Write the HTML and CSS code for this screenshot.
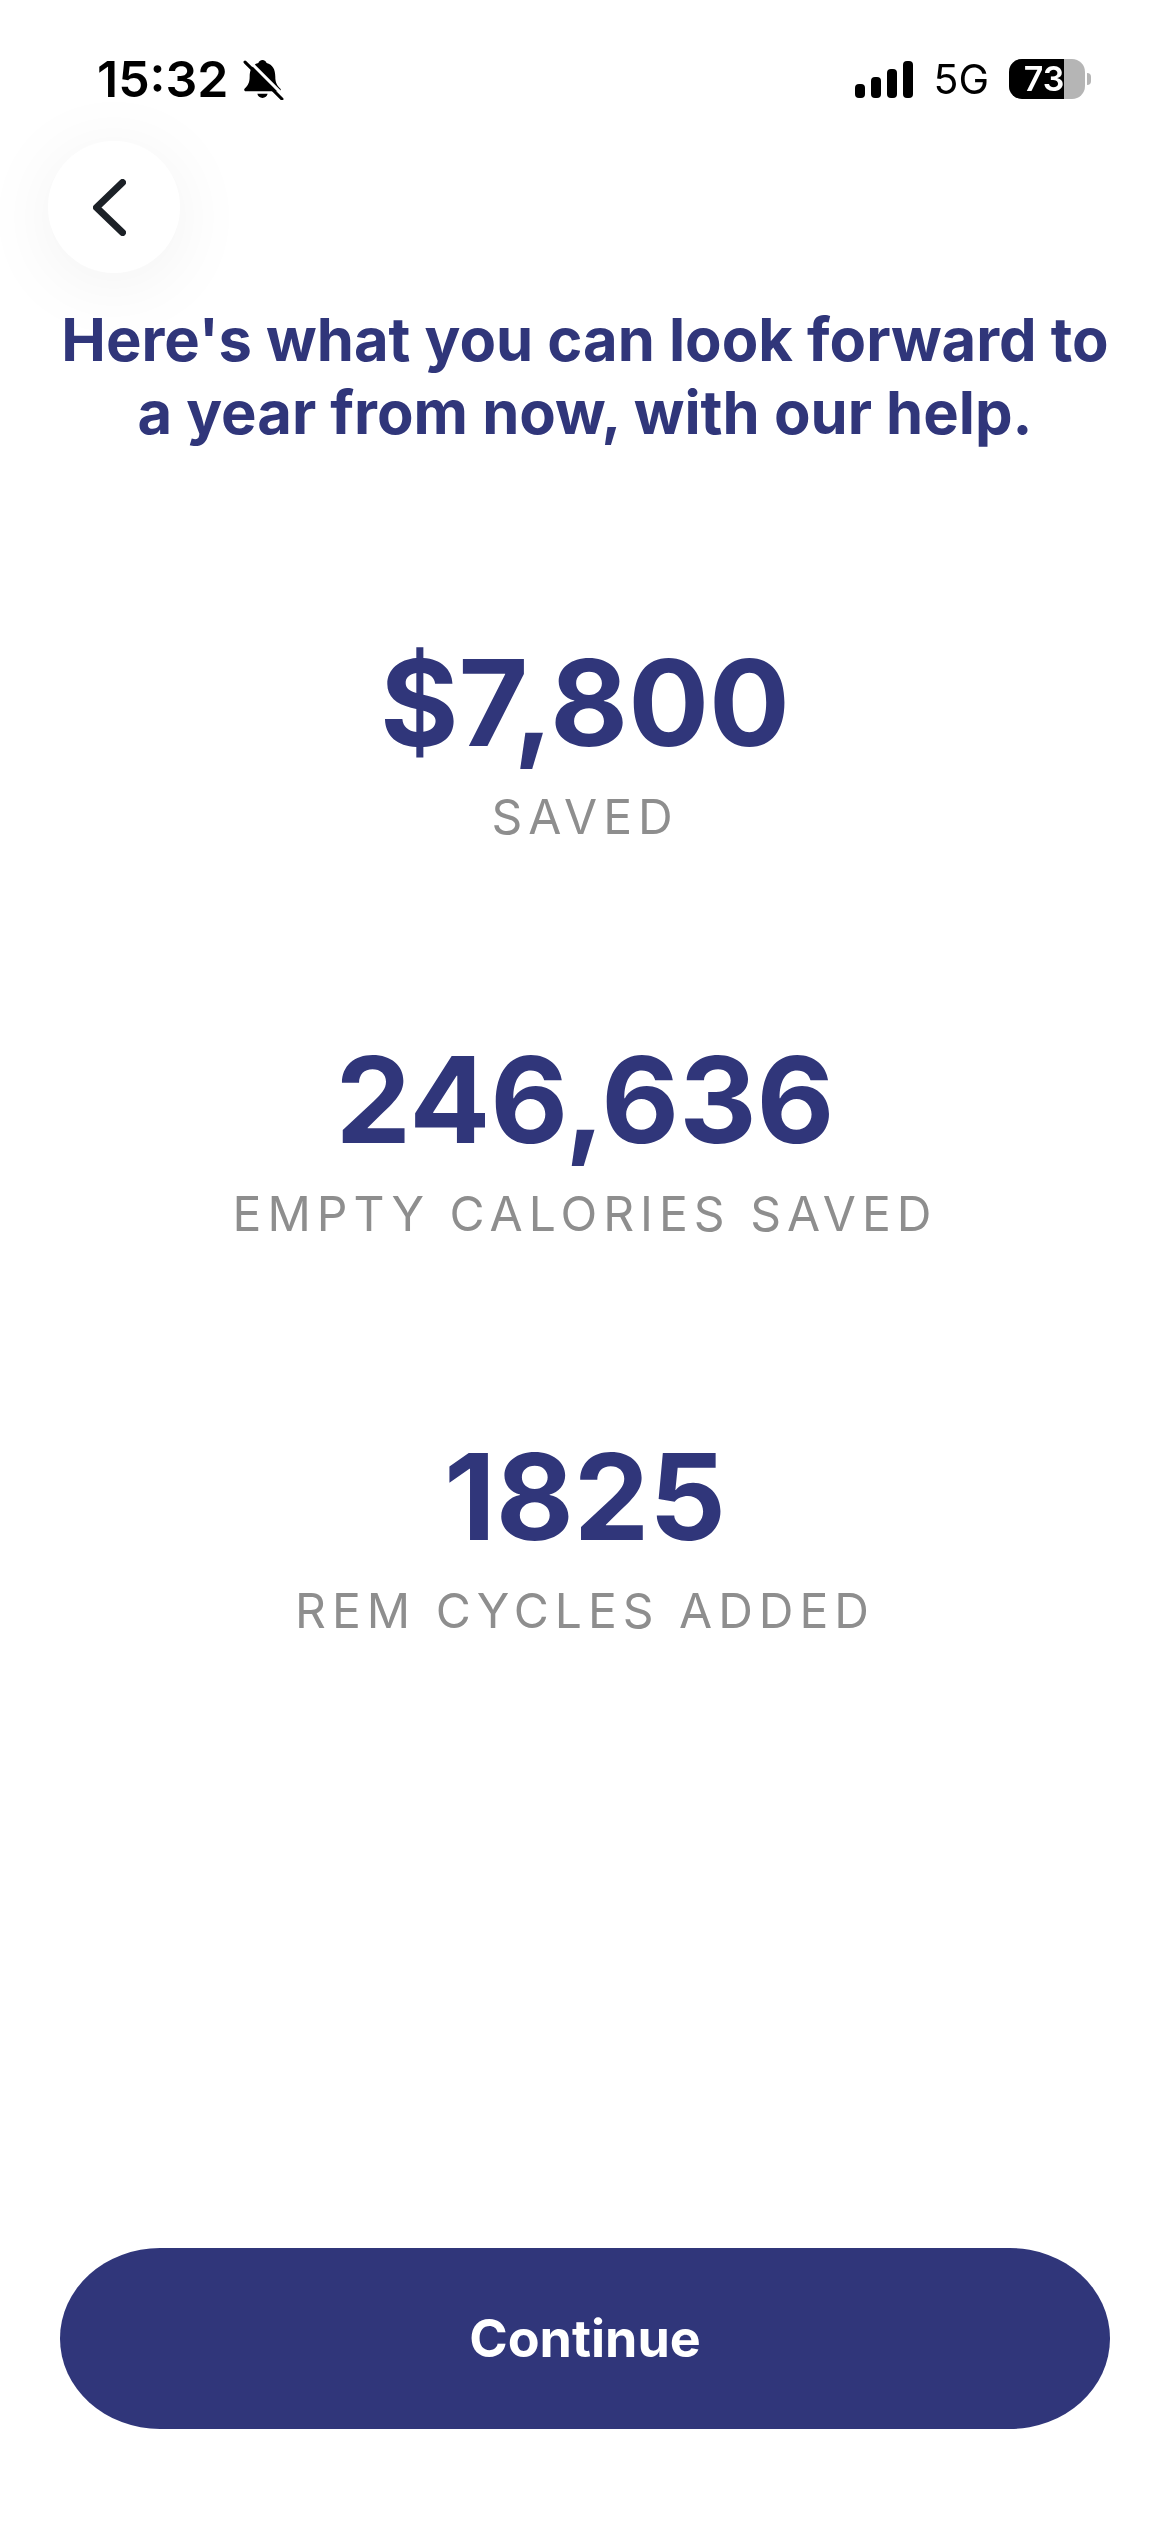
FILE: index.html
```html
<!DOCTYPE html>
<html lang="en">

<head>
    <meta charset="UTF-8">
    <meta name="viewport" content="width=device-width, initial-scale=1.0">
    <title>Your year ahead</title>
    <link rel="stylesheet" href="styles.css">
</head>

<body>
    <div class="screen">
        <div class="status-bar">
            <div class="status-left">
                <span class="clock">15:32</span>
                <svg class="bell" viewBox="0 0 40 40" width="41" height="41">
                    <path d="M19 1c2 0 3.500 1.300 4 3 6 1.500 8.500 6.500 8.500 13 0 6 1.500 8.500 5 12 .8 1 .2 2.500-1.200 2.500H2.700c-1.400 0-2-1.500-1.200-2.500 3.500-3.500 5-6 5-12 0-6.500 2.500-11.500 8.500-13 .5-1.700 2-3 4-3zM14 34h10c-.4 2.500-2.500 4-5 4s-4.600-1.500-5-4z" fill="#000"/>
                    <path d="M5 1l34 34" stroke="#fff" stroke-width="3"/>
                    <path d="M2 3l36 36" stroke="#000" stroke-width="3" stroke-linecap="round"/>
                </svg>
            </div>
            <div class="status-right">
                <div class="signal">
                    <span class="bar bar-1"></span>
                    <span class="bar bar-2"></span>
                    <span class="bar bar-3"></span>
                    <span class="bar bar-4"></span>
                </div>
                <span class="network">5G</span>
                <div class="battery">
                    <div class="battery-body">
                        <div class="battery-level" style="width: 73%"></div>
                        <span class="battery-text">73</span>
                    </div>
                    <span class="battery-cap"></span>
                </div>
            </div>
        </div>

        <div class="top-row">
            <button class="back-btn">
                <svg viewBox="0 0 33 57" width="33" height="57">
                    <path d="M29.500 3.500L3.500 28.500l26 25" fill="none" stroke="#1c2127" stroke-width="7" stroke-linecap="round" stroke-linejoin="round"/>
                </svg>
            </button>
        </div>

        <h1 class="title">Here's what you can look forward to<br>a year from now, with our help.</h1>

        <div class="stats">
            <div class="stat">
                <div class="stat-value">$7,800</div>
                <div class="stat-label">SAVED</div>
            </div>
            <div class="stat">
                <div class="stat-value">246,636</div>
                <div class="stat-label">EMPTY CALORIES SAVED</div>
            </div>
            <div class="stat">
                <div class="stat-value">1825</div>
                <div class="stat-label">REM CYCLES ADDED</div>
            </div>
        </div>

        <button class="continue-btn">Continue</button>
    </div>
</body>

</html>
```

FILE: styles.css
```css
* {
    box-sizing: border-box;
}

body {
    margin: 0;
    background: #fff;
    font-family: Inter, "Liberation Sans", sans-serif;
}

.screen {
    width: 1170px;
    height: 2532px;
    display: flex;
    flex-direction: column;
    overflow: hidden;
    will-change: transform;
}

.status-bar {
    height: 141px;
    padding: 50px 79px 0 97px;
    display: flex;
    justify-content: space-between;
    align-items: flex-start;
}

.status-left {
    display: flex;
    align-items: center;
    gap: 14px;
}

.clock {
    font-size: 50px;
    font-weight: 600;
    line-height: 58px;
    color: #000;
}

.status-right {
    display: flex;
    align-items: center;
    height: 58px;
}

.signal {
    display: flex;
    align-items: flex-end;
    gap: 6px;
    height: 37px;
    margin-right: 20px;
}

.bar {
    width: 10px;
    border-radius: 4px;
    background: #000;
}

.bar-1 {
    height: 14px;
}

.bar-2 {
    height: 21px;
}

.bar-3 {
    height: 29px;
}

.bar-4 {
    height: 37px;
}

.network {
    font-size: 41px;
    font-weight: 400;
    color: #000;
    margin-right: 20px;
}

.battery {
    display: flex;
    align-items: center;
    gap: 2px;
}

.battery-body {
    position: relative;
    width: 76px;
    height: 40px;
    border-radius: 13px;
    background: #b5b5b5;
    overflow: hidden;
}

.battery-level {
    height: 100%;
    background: #000;
}

.battery-text {
    position: absolute;
    top: 0;
    left: 0;
    right: 6px;
    text-align: center;
    font-size: 34px;
    font-weight: 600;
    line-height: 40px;
    color: #fff;
}

.battery-cap {
    width: 4px;
    height: 12px;
    border-radius: 0 4px 4px 0;
    background: #b5b5b5;
}

.top-row {
    padding-left: 48px;
}

.back-btn {
    width: 132px;
    height: 132px;
    border: none;
    border-radius: 50%;
    background: #fff;
    box-shadow: 0 10px 80px rgba(0, 0, 0, 0.06);
    display: flex;
    align-items: center;
    justify-content: center;
    padding: 0 9px 0 0;
}

.title {
    margin: 30px 0 0;
    text-align: center;
    font-size: 59.700px;
    font-weight: 700;
    line-height: 73px;
    color: #30367a;
}

.stats {
    margin-top: 188px;
    display: flex;
    flex-direction: column;
    gap: 189px;
}

.stat {
    text-align: center;
}

.stat-value {
    font-size: 120px;
    font-weight: 750;
    line-height: 132px;
    color: #30367a;
}

.stat-label {
    margin-top: 20px;
    font-size: 48px;
    font-weight: 400;
    line-height: 56px;
    letter-spacing: 6px;
    color: #8e8e8e;
}

.continue-btn {
    margin: auto 60px 103px;
    height: 181px;
    border: none;
    border-radius: 100px / 90.500px;
    background: #30367a;
    color: #fff;
    font-family: inherit;
    font-size: 52px;
    font-weight: 700;
}
```
